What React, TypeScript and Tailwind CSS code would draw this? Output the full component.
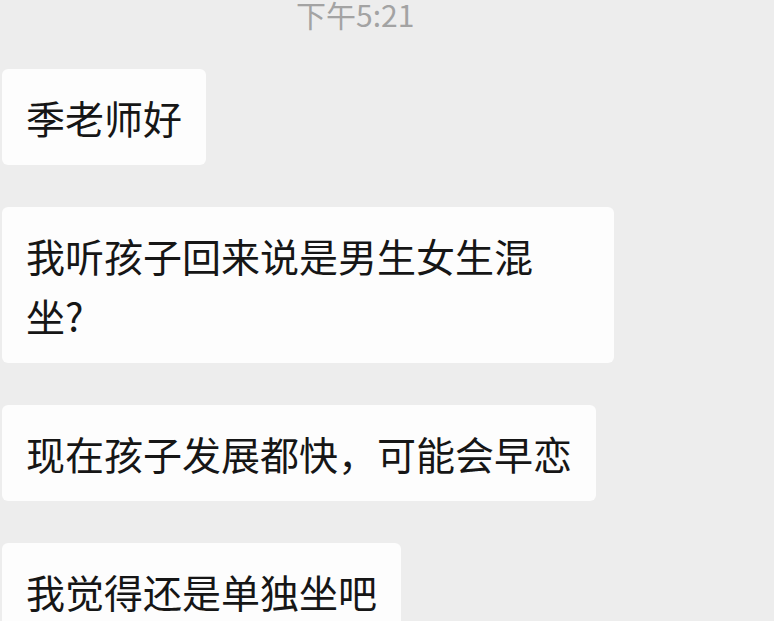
import React from "react";

const messages: { text: React.ReactNode; width?: string }[] = [
  { text: "季老师好" },
  {
    text: (
      <>
        我听孩子回来说是男生女生混
        <br />
        坐?
      </>
    ),
    width: "w-[612px]",
  },
  { text: "现在孩子发展都快，可能会早恋" },
  { text: "我觉得还是单独坐吧" },
];

const Bubble = ({ text, width }: { text: React.ReactNode; width?: string }) => {
  return (
    <div
      className={`ml-[2px] ${width ?? "w-fit"} bg-[#fdfdfd] rounded-[6px] pl-[24px] pr-[24px] py-[18px] text-[39px] leading-[60px] text-[#161616]`}
    >
      {text}
    </div>
  );
};

export default function App() {
  return (
    <div
      className="w-[774px] h-[621px] overflow-hidden bg-[#ededed] flex flex-col gap-[42px]"
      style={{ fontFamily: '"Noto Sans CJK SC", "Noto Sans", sans-serif' }}
    >
      <div className="h-[27px] pl-[296px] text-[30px] leading-[28px] text-[#a3a3a3]">
        下午5:21
      </div>
      {messages.map((m, index) => (
        <Bubble key={index} text={m.text} width={m.width} />
      ))}
    </div>
  );
}
